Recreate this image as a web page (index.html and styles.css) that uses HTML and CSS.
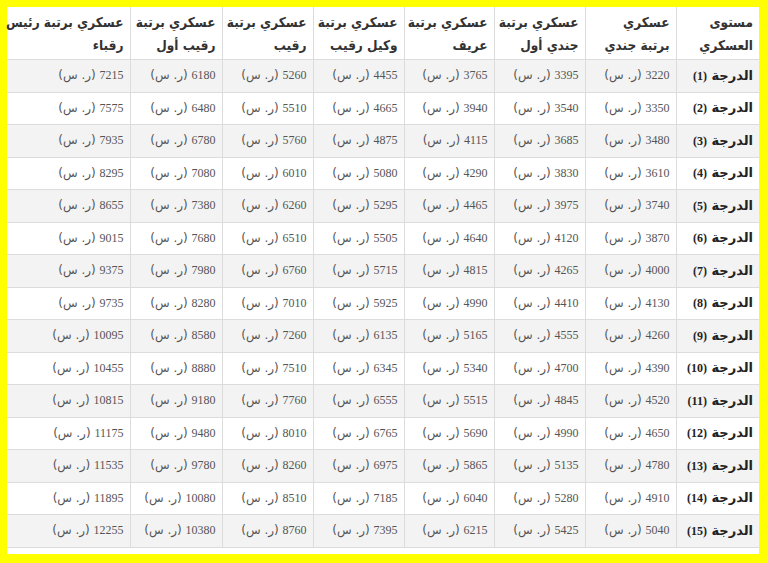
FILE: index.html
```html
<!DOCTYPE html>
<html lang="ar" dir="rtl">
<head>
<meta charset="utf-8">
<title>رواتب العسكريين</title>
<link rel="stylesheet" href="styles.css">
</head>
<body>
<div class="frame">
<table class="salary">
<colgroup>
<col class="c-level"><col class="c-std"><col class="c-std"><col class="c-mid"><col class="c-std"><col class="c-std"><col class="c-wide"><col class="c-last">
</colgroup>
<thead>
<tr>
<th>مستوى<br>العسكري</th>
<th>عسكري<br>برتبة جندي</th>
<th>عسكري برتبة<br>جندي أول</th>
<th>عسكري برتبة<br>عريف</th>
<th>عسكري برتبة<br>وكيل رقيب</th>
<th>عسكري برتبة<br>رقيب</th>
<th>عسكري برتبة<br>رقيب أول</th>
<th>عسكري برتبة رئيس<br>رقباء</th>
</tr>
</thead>
<tbody>
<tr><td class="lvl">الدرجة <span class="n">(1)</span></td><td><span class="n">3220</span> (ر. س)</td><td><span class="n">3395</span> (ر. س)</td><td><span class="n">3765</span> (ر. س)</td><td><span class="n">4455</span> (ر. س)</td><td><span class="n">5260</span> (ر. س)</td><td><span class="n">6180</span> (ر. س)</td><td><span class="n">7215</span> (ر. س)</td></tr>
<tr><td class="lvl">الدرجة <span class="n">(2)</span></td><td><span class="n">3350</span> (ر. س)</td><td><span class="n">3540</span> (ر. س)</td><td><span class="n">3940</span> (ر. س)</td><td><span class="n">4665</span> (ر. س)</td><td><span class="n">5510</span> (ر. س)</td><td><span class="n">6480</span> (ر. س)</td><td><span class="n">7575</span> (ر. س)</td></tr>
<tr><td class="lvl">الدرجة <span class="n">(3)</span></td><td><span class="n">3480</span> (ر. س)</td><td><span class="n">3685</span> (ر. س)</td><td><span class="n">4115</span> (ر. س)</td><td><span class="n">4875</span> (ر. س)</td><td><span class="n">5760</span> (ر. س)</td><td><span class="n">6780</span> (ر. س)</td><td><span class="n">7935</span> (ر. س)</td></tr>
<tr><td class="lvl">الدرجة <span class="n">(4)</span></td><td><span class="n">3610</span> (ر. س)</td><td><span class="n">3830</span> (ر. س)</td><td><span class="n">4290</span> (ر. س)</td><td><span class="n">5080</span> (ر. س)</td><td><span class="n">6010</span> (ر. س)</td><td><span class="n">7080</span> (ر. س)</td><td><span class="n">8295</span> (ر. س)</td></tr>
<tr><td class="lvl">الدرجة <span class="n">(5)</span></td><td><span class="n">3740</span> (ر. س)</td><td><span class="n">3975</span> (ر. س)</td><td><span class="n">4465</span> (ر. س)</td><td><span class="n">5295</span> (ر. س)</td><td><span class="n">6260</span> (ر. س)</td><td><span class="n">7380</span> (ر. س)</td><td><span class="n">8655</span> (ر. س)</td></tr>
<tr><td class="lvl">الدرجة <span class="n">(6)</span></td><td><span class="n">3870</span> (ر. س)</td><td><span class="n">4120</span> (ر. س)</td><td><span class="n">4640</span> (ر. س)</td><td><span class="n">5505</span> (ر. س)</td><td><span class="n">6510</span> (ر. س)</td><td><span class="n">7680</span> (ر. س)</td><td><span class="n">9015</span> (ر. س)</td></tr>
<tr><td class="lvl">الدرجة <span class="n">(7)</span></td><td><span class="n">4000</span> (ر. س)</td><td><span class="n">4265</span> (ر. س)</td><td><span class="n">4815</span> (ر. س)</td><td><span class="n">5715</span> (ر. س)</td><td><span class="n">6760</span> (ر. س)</td><td><span class="n">7980</span> (ر. س)</td><td><span class="n">9375</span> (ر. س)</td></tr>
<tr><td class="lvl">الدرجة <span class="n">(8)</span></td><td><span class="n">4130</span> (ر. س)</td><td><span class="n">4410</span> (ر. س)</td><td><span class="n">4990</span> (ر. س)</td><td><span class="n">5925</span> (ر. س)</td><td><span class="n">7010</span> (ر. س)</td><td><span class="n">8280</span> (ر. س)</td><td><span class="n">9735</span> (ر. س)</td></tr>
<tr><td class="lvl">الدرجة <span class="n">(9)</span></td><td><span class="n">4260</span> (ر. س)</td><td><span class="n">4555</span> (ر. س)</td><td><span class="n">5165</span> (ر. س)</td><td><span class="n">6135</span> (ر. س)</td><td><span class="n">7260</span> (ر. س)</td><td><span class="n">8580</span> (ر. س)</td><td><span class="n">10095</span> (ر. س)</td></tr>
<tr><td class="lvl">الدرجة <span class="n">(10)</span></td><td><span class="n">4390</span> (ر. س)</td><td><span class="n">4700</span> (ر. س)</td><td><span class="n">5340</span> (ر. س)</td><td><span class="n">6345</span> (ر. س)</td><td><span class="n">7510</span> (ر. س)</td><td><span class="n">8880</span> (ر. س)</td><td><span class="n">10455</span> (ر. س)</td></tr>
<tr><td class="lvl">الدرجة <span class="n">(11)</span></td><td><span class="n">4520</span> (ر. س)</td><td><span class="n">4845</span> (ر. س)</td><td><span class="n">5515</span> (ر. س)</td><td><span class="n">6555</span> (ر. س)</td><td><span class="n">7760</span> (ر. س)</td><td><span class="n">9180</span> (ر. س)</td><td><span class="n">10815</span> (ر. س)</td></tr>
<tr><td class="lvl">الدرجة <span class="n">(12)</span></td><td><span class="n">4650</span> (ر. س)</td><td><span class="n">4990</span> (ر. س)</td><td><span class="n">5690</span> (ر. س)</td><td><span class="n">6765</span> (ر. س)</td><td><span class="n">8010</span> (ر. س)</td><td><span class="n">9480</span> (ر. س)</td><td><span class="n">11175</span> (ر. س)</td></tr>
<tr><td class="lvl">الدرجة <span class="n">(13)</span></td><td><span class="n">4780</span> (ر. س)</td><td><span class="n">5135</span> (ر. س)</td><td><span class="n">5865</span> (ر. س)</td><td><span class="n">6975</span> (ر. س)</td><td><span class="n">8260</span> (ر. س)</td><td><span class="n">9780</span> (ر. س)</td><td><span class="n">11535</span> (ر. س)</td></tr>
<tr><td class="lvl">الدرجة <span class="n">(14)</span></td><td><span class="n">4910</span> (ر. س)</td><td><span class="n">5280</span> (ر. س)</td><td><span class="n">6040</span> (ر. س)</td><td><span class="n">7185</span> (ر. س)</td><td><span class="n">8510</span> (ر. س)</td><td><span class="n">10080</span> (ر. س)</td><td><span class="n">11895</span> (ر. س)</td></tr>
<tr><td class="lvl">الدرجة <span class="n">(15)</span></td><td><span class="n">5040</span> (ر. س)</td><td><span class="n">5425</span> (ر. س)</td><td><span class="n">6215</span> (ر. س)</td><td><span class="n">7395</span> (ر. س)</td><td><span class="n">8760</span> (ر. س)</td><td><span class="n">10380</span> (ر. س)</td><td><span class="n">12255</span> (ر. س)</td></tr>
</tbody>
</table>
</div>
</body>
</html>
```
FILE: styles.css
```css
html, body {
  margin: 0;
  padding: 0;
  background: #ffff00;
}
body {
  width: 768px;
  height: 563px;
  overflow: hidden;
  font-family: "DejaVu Sans", sans-serif;
}
.frame {
  margin: 7px 9px 0 7px;
  width: 752px;
  height: 547px;
  background: #ffffff;
}
.salary {
  width: 752px;
  border-collapse: collapse;
  table-layout: fixed;
}
.c-level { width: 83px; }
.c-std { width: 91px; }
.c-mid { width: 90px; }
.c-wide { width: 92px; }
.c-last { width: 123px; }
.salary th {
  height: 52px;
  padding: 4px 6px 2px 2px;
  box-sizing: border-box;
  font-family: "DejaVu Sans Condensed", "DejaVu Sans", sans-serif;
  font-size: 13.5px;
  line-height: 23px;
  font-weight: bold;
  color: #333333;
  text-align: right;
  vertical-align: middle;
  white-space: nowrap;
  border-left: 1px solid #dcdcdc;
  border-bottom: 1px solid #dcdcdc;
}
.salary th:last-child { border-left: none; }
.salary td {
  height: 32.5px;
  padding: 0 6px 0 2px;
  box-sizing: border-box;
  font-size: 12px;
  color: #555555;
  text-align: right;
  vertical-align: middle;
  white-space: nowrap;
  border-left: 1px solid #dcdcdc;
  border-bottom: 1px solid #dcdcdc;
}
.salary td:last-child { border-left: none; }
.salary tbody tr:nth-child(odd) td { background: #f3f3f3; }
.salary .n {
  font-family: "Liberation Serif", serif;
  font-size: 12px;
}
.salary td.lvl {
  font-size: 13px;
  font-weight: bold;
  color: #222222;
}
.salary td.lvl .n {
  font-size: 12px;
}
```
